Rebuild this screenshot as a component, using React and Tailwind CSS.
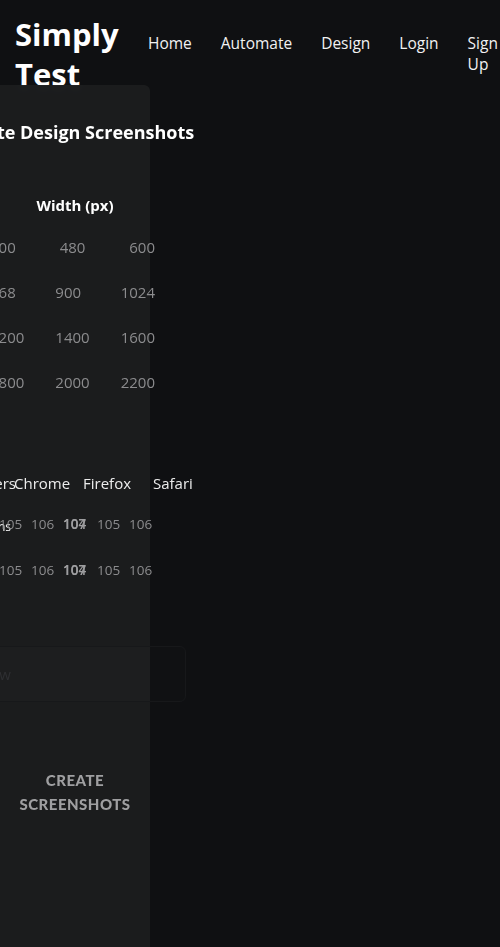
import React from "react";

const widths = [
  ["300", "480", "600"],
  ["768", "900", "1024"],
  ["1200", "1400", "1600"],
  ["1800", "2000", "2200"],
];

function VersionRow({ label }) {
  return (
    <div className="flex h-[46px] w-[300px] items-center text-[13.5px] text-[#8c8c8e]">
      <div className="w-[86px] shrink-0 whitespace-nowrap pt-[6px] text-right text-[12px] text-white">{label}</div>
      <div className="-ml-[12px] w-[32px] shrink-0">105</div>
      <div className="w-[32px] shrink-0">106</div>
      <div className="grid w-[34px] shrink-0 font-semibold text-[#9d9d9f]">
        <span className="col-start-1 row-start-1">104</span>
        <span className="col-start-1 row-start-1">107</span>
      </div>
      <div className="w-[32px] shrink-0">105</div>
      <div className="w-[32px] shrink-0">106</div>
    </div>
  );
}

export default function App() {
  return (
    <div className="min-h-screen overflow-hidden bg-[#0f1012] font-['Open_Sans',sans-serif] text-white">
      <header className="flex h-[85px] items-start">
        <h1 className="w-[125px] shrink-0 pl-[15px] pt-[14px] text-[31px] font-bold leading-[40px]">
          Simply Test
        </h1>
        <nav className="flex min-w-0 flex-1 gap-[29px] pl-[23px] pt-[33px] text-[15.5px] leading-[21px] text-[#f2f2f2]">
          <a className="shrink-0">Home</a>
          <a className="shrink-0">Automate</a>
          <a className="shrink-0">Design</a>
          <a className="shrink-0">Login</a>
          <a className="min-w-0">Sign Up</a>
        </nav>
      </header>

      <main className="relative z-10 flex min-h-[862px] w-[150px] flex-col items-center rounded-tr-md bg-[#1c1d1f]/95 pb-10 backdrop-blur-[3px]">
        <h2 className="mt-[35px] whitespace-nowrap text-[18px] font-bold leading-6">
          Create Design Screenshots
        </h2>

        <div className="mt-[49px] whitespace-nowrap text-[15px] font-bold leading-6">Width (px)</div>

        <div className="mr-[5px] mt-[8px] flex flex-col text-[15px] text-[#8c8c8e]">
          {widths.map((row, i) => (
            <div key={i} className="flex h-[45px] w-[165px] items-center justify-between">
              {row.map((v) => (
                <span key={v}>{v}</span>
              ))}
            </div>
          ))}
        </div>

        <div className="mt-[67px] flex w-[300px] text-[15px] leading-[22px] text-[#ececec]">
          <div className="w-[91px] shrink-0 whitespace-nowrap text-right">Browsers</div>
          <div className="-ml-[2px] w-[69px] shrink-0">Chrome</div>
          <div className="w-[70px] shrink-0">Firefox</div>
          <div className="shrink-0">Safari</div>
        </div>

        <div className="mt-[7px] flex flex-col">
          <VersionRow label="Versions" />
          <VersionRow label="" />
        </div>

        <div className="mt-[53px] flex h-[56px] w-[222px] shrink-0 items-center justify-end rounded-md border border-[#17181a] bg-white/[0.008] pr-[174px] text-[15px] text-[#2e2f32]">
          <span className="whitespace-nowrap">Enter URL to preview</span>
        </div>

        <button className="mt-[66px] w-[130px] text-center font-['Lato',sans-serif] text-[15px] font-black uppercase leading-6 tracking-[0.5px] text-[#9f9fa1]">
          Create Screenshots
        </button>
      </main>
    </div>
  );
}
